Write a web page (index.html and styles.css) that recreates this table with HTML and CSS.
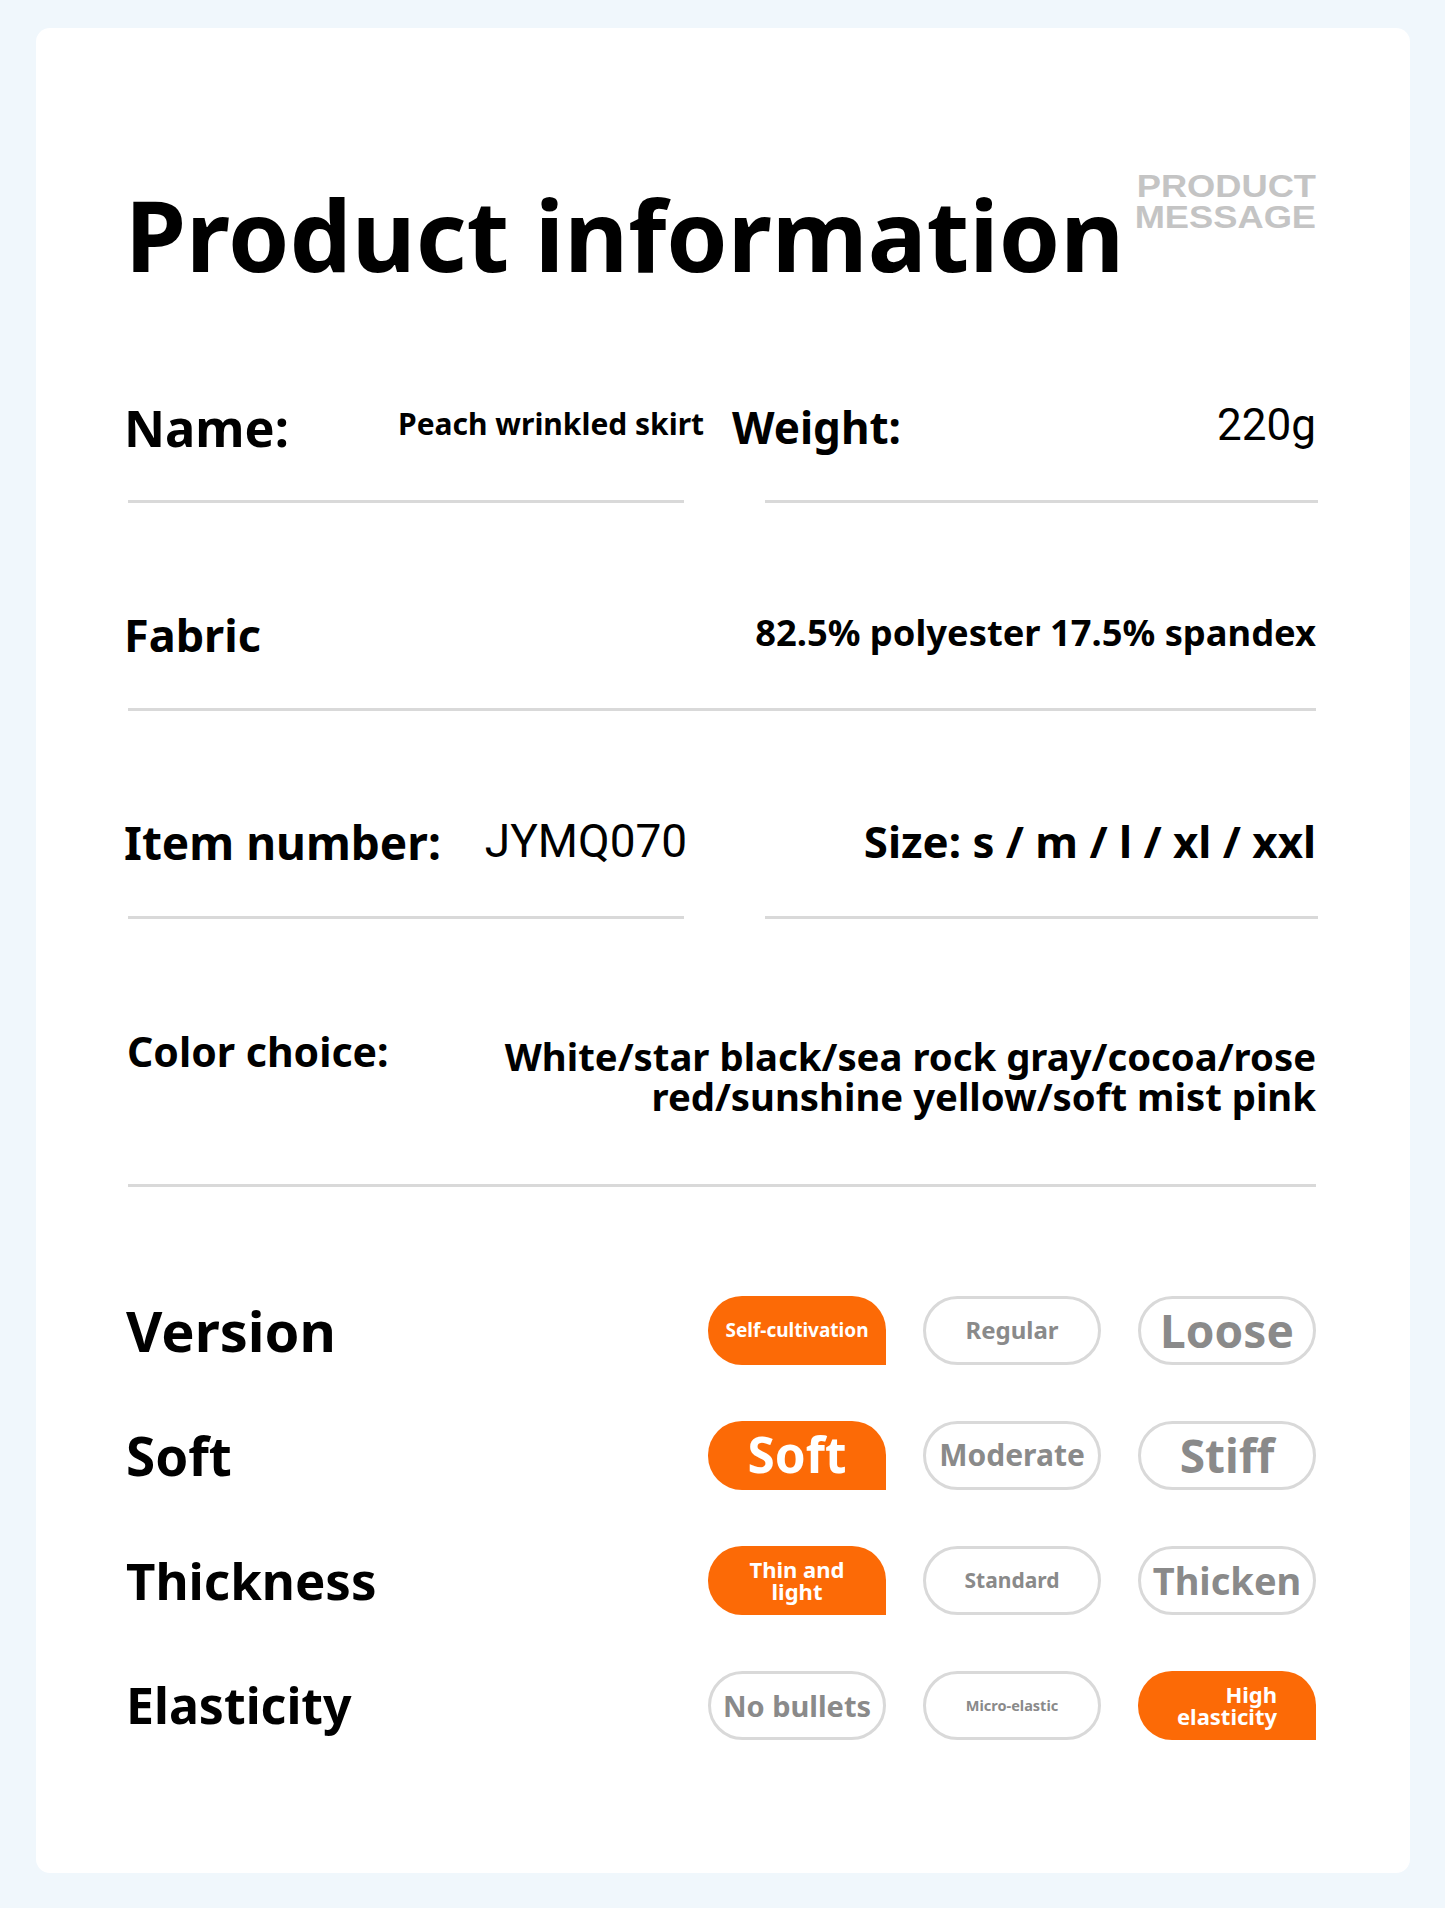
FILE: index.html
```html
<!DOCTYPE html>
<html lang="en">
<head>
<meta charset="utf-8">
<title>Product information</title>
<link rel="stylesheet" href="styles.css">
</head>
<body>
<div class="page">
  <div class="card">
    <header class="header">
      <h1 class="title">Product information</h1>
      <div class="tag"><span>PRODUCT</span><span>MESSAGE</span></div>
    </header>

    <div class="row row-name">
      <div class="label lbl-name">Name:</div>
      <div class="val-peach">Peach wrinkled skirt</div>
      <div class="label lbl-weight">Weight:</div>
      <div class="val-thin val-220">220g</div>
    </div>
    <div class="rules split rules-1"><span></span><span></span></div>

    <div class="row row-fabric">
      <div class="label lbl-fabric">Fabric</div>
      <div class="val-fabric">82.5% polyester 17.5% spandex</div>
    </div>
    <div class="rules full rules-2"><span></span></div>

    <div class="row row-item">
      <div class="label lbl-item">Item number:</div>
      <div class="val-thin val-item">JYMQ070</div>
      <div class="val-size">Size: s / m / l / xl / xxl</div>
    </div>
    <div class="rules split rules-3"><span></span><span></span></div>

    <div class="row row-color">
      <div class="label lbl-color">Color choice:</div>
      <div class="val-color"><div class="cline">White/star black/sea rock gray/cocoa/rose</div><div class="cline">red/sunshine yellow/soft mist pink</div></div>
    </div>
    <div class="rules full rules-4"><span></span></div>

    <div class="attrs">
      <div class="attr">
        <div class="attr-label l-version">Version</div>
        <div class="chip on"><span class="t-selfc">Self-cultivation</span></div>
        <div class="chip"><span class="t-regular">Regular</span></div>
        <div class="chip"><span class="t-loose">Loose</span></div>
      </div>
      <div class="attr">
        <div class="attr-label l-soft">Soft</div>
        <div class="chip on"><span class="t-soft">Soft</span></div>
        <div class="chip"><span class="t-moderate">Moderate</span></div>
        <div class="chip"><span class="t-stiff">Stiff</span></div>
      </div>
      <div class="attr">
        <div class="attr-label l-thick">Thickness</div>
        <div class="chip on"><span class="t-thin"><span class="tl">Thin and</span><span class="tl">light</span></span></div>
        <div class="chip"><span class="t-standard">Standard</span></div>
        <div class="chip"><span class="t-thicken">Thicken</span></div>
      </div>
      <div class="attr">
        <div class="attr-label l-elastic">Elasticity</div>
        <div class="chip"><span class="t-nob">No bullets</span></div>
        <div class="chip"><span class="t-micro">Micro-elastic</span></div>
        <div class="chip on"><span class="t-high"><span class="tl">High</span><span class="tl">elasticity</span></span></div>
      </div>
    </div>
  </div>
</div>
</body>
</html>
```

FILE: styles.css
```css
* { box-sizing: border-box; margin: 0; padding: 0; }

body {
  background: #f0f7fc;
  font-family: "Noto Sans", "Open Sans", sans-serif;
  color: #000;
}

.page {
  padding: 28px 35px 35px 36px;
}

.card {
  background: #fff;
  border-radius: 14px;
  height: 1845px;
  padding: 143px 94px 0 88px;
}

.header {
  display: flex;
  justify-content: space-between;
  align-items: flex-start;
}

.title {
  margin-top: 14px;
  margin-left: 1px;
  font-size: 98.4px;
  line-height: 98px;
  font-weight: 700;
  white-space: nowrap;
}

.tag {
  display: flex;
  flex-direction: column;
  align-items: flex-end;
  font-family: "Liberation Sans", Arial, sans-serif;
  font-weight: 700;
  font-size: 31px;
  line-height: 31px;
  color: #c4c4c4;
  transform: scaleX(1.17);
  transform-origin: right top;
}

.row {
  display: flex;
  align-items: flex-start;
  font-weight: 700;
}

.label, .val-peach, .val-fabric, .val-size, .val-color {
  line-height: 1;
  white-space: nowrap;
}

.val-thin {
  font-family: Roboto, "Liberation Sans", sans-serif;
  font-weight: 400;
  line-height: 1;
}

/* Row 1 */
.row-name { margin-top: 117px; }
.lbl-name { font-size: 50.5px; margin-top: 3px; width: 274px; }
.val-peach { font-size: 30px; margin-top: 9px; width: 334px; }
.lbl-weight { font-size: 44px; margin-top: 5px; }
.val-220 { font-size: 44px; margin-top: 3px; margin-left: auto; }

.rules { display: grid; }
.rules span { display: block; height: 3px; background: #d9d9d9; }
.split { grid-template-columns: 556px 553px; column-gap: 81px; padding-left: 4px; }
.full { padding-left: 4px; }

.rules-1 { margin-top: 46px; }

/* Row 2 */
.row-fabric { margin-top: 109px; justify-content: space-between; }
.lbl-fabric { font-size: 45px; }
.val-fabric { font-size: 36.3px; margin-top: 2px; }
.rules-2 { margin-top: 51px; }

/* Row 3 */
.row-item { margin-top: 108px; }
.lbl-item { font-size: 46px; margin-top: 0; }
.val-item { font-size: 46px; margin-left: 44px; margin-top: -1px; }
.val-size { font-size: 43.8px; margin-top: 1px; margin-left: auto; }
.rules-3 { margin-top: 51px; }

/* Row 4 */
.row-color { margin-top: 111px; justify-content: space-between; }
.lbl-color { font-size: 41px; margin-top: 1px; margin-left: 3px; }
.val-color { font-size: 38.3px; margin-top: 6px; text-align: right; }
.cline { height: 40px; line-height: 40px; }
.rules-4 { margin-top: 68px; }

/* Attributes */
.attrs {
  margin-top: 109px;
  display: flex;
  flex-direction: column;
  gap: 56px;
}

.attr {
  display: grid;
  grid-template-columns: 1fr 178px 178px 178px;
  column-gap: 37px;
  align-items: center;
  height: 69px;
}

.attr-label {
  font-weight: 700;
  line-height: 1;
  padding-left: 2px;
  white-space: nowrap;
}
.l-version { font-size: 56px; }
.l-soft { font-size: 53px; }
.l-thick { font-size: 51px; }
.l-elastic { font-size: 50px; }

.chip {
  height: 69px;
  border: 3px solid #d9d9d9;
  border-radius: 35px;
  display: flex;
  align-items: center;
  justify-content: center;
  font-weight: 700;
  color: #8a8a8a;
  line-height: 1;
  white-space: nowrap;
  background: #fff;
}

.chip.on {
  border: none;
  background: #fc6a06;
  color: #fff;
  border-radius: 34px 34px 0 34px;
}

.tl { display: block; height: 22px; line-height: 22px; }

.t-selfc { font-size: 19px; }
.t-regular { font-size: 24px; }
.t-loose { font-size: 46px; }
.t-soft { font-size: 49.5px; }
.t-moderate { font-size: 30px; }
.t-stiff { font-size: 46px; }
.t-thin { font-size: 22px; text-align: center; }
.t-standard { font-size: 21px; }
.t-thicken { font-size: 38px; }
.t-nob { font-size: 29px; }
.t-micro { font-size: 14.5px; }
.t-high { font-size: 22px; text-align: right; }
```
